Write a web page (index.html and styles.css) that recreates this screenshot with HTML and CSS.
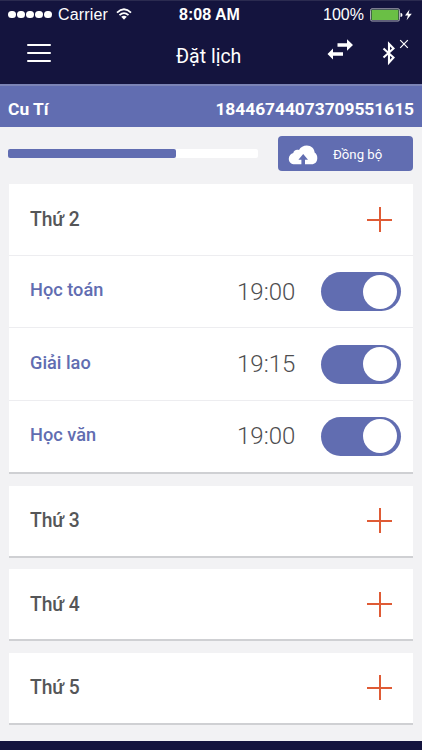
FILE: index.html
```
<!DOCTYPE html>
<html lang="vi">
<head>
<meta charset="utf-8">
<title>Đặt lịch</title>
<link rel="stylesheet" href="styles.css">
</head>
<body>
<div class="app">
  <header class="top">
    <div class="status">
      <div class="signal"><i></i><i></i><i></i><i></i><i></i></div>
      <span class="carrier">Carrier</span>
      <svg class="wifi" width="16" height="12" viewBox="0 0 16 12" fill="none" stroke="#fff" stroke-width="1.8"><path d="M1 4.6Q8-2 15 4.6M3.5 7.2Q8 3 12.5 7.2"/><path d="M5.2 8.8Q8 6.6 10.8 8.8L8 11.8z" fill="#fff" stroke="none"/></svg>
      <span class="clock">8:08 AM</span>
      <span class="percent">100%</span>
      <svg class="battery" width="42" height="14" viewBox="0 0 42 14"><rect x=".5" y=".8" width="29" height="12.2" rx="1.5" fill="none" stroke="#a9a9b5"/><rect x="1.5" y="1.8" width="27" height="10.2" fill="#6abf45"/><path d="M30.5 4.8q2 .4 2 2.1t-2 2.1z" fill="#fff"/><path d="M39.5 1.5L35 7.6h2.9L36.6 12.3 41.8 5.8h-3.2z" fill="#fff"/></svg>
    </div>
    <div class="nav">
      <svg class="menu" width="24" height="20" viewBox="0 0 24 20" stroke="#fff" stroke-width="2" stroke-linecap="round"><path d="M1 2h22M1 10h22M1 18h22"/></svg>
      <h1>Đặt lịch</h1>
      <svg class="swap" width="27" height="22" viewBox="0 0 27 22"><path d="M10.500 4.300h9.500V.2l6 5.800-6 5.800V7.700h-9.500zM16 13.300H6V9.400L.5 15 6 20.600v-3.900h10z" fill="#fff"/></svg>
      <svg class="bluetooth" width="28" height="28" viewBox="0 0 28 28" fill="none" stroke="#fff"><path d="M1.500 9.500l10 9-4.500 5V4.800l4.500 4.700-10 9" stroke-width="2.100"/><path d="M18.200 1.200l7.600 7.600M25.800 1.200l-7.600 7.600" stroke-width="1.200"/></svg>
    </div>
  </header>
  <div class="profile"><span>Cu Tí</span><span class="id">18446744073709551615</span></div>
  <main>
    <div class="sync">
      <div class="track"><div class="fill"></div></div>
      <button class="sync-btn">
        <svg width="30" height="20" viewBox="0 0 30 20"><path d="M7 19.300C3 19.300.8 17 .8 13.700C.8 10.700 2.800 8.600 5.300 8C5.500 5.500 8.300 4 11 5C12.500 2.200 15.500.5 18.800.5C23.200.5 26.400 3.500 26.600 7.500C28.500 8.800 29.400 10.800 29.300 13.300C29.200 17 27 19.300 23.500 19.300H17V14.800H20L15.200 9 10.400 14.800H13.400V19.300z" fill="#fff"/></svg>
        <span>Đồng bộ</span>
      </button>
    </div>
    <section class="card">
      <div class="day first"><h2>Thứ 2</h2><i class="plus"></i></div>
      <div class="item"><span class="name">Học toán</span><span class="time">19:00</span><i class="toggle"></i></div>
      <div class="item"><span class="name">Giải lao</span><span class="time">19:15</span><i class="toggle"></i></div>
      <div class="item"><span class="name">Học văn</span><span class="time">19:00</span><i class="toggle"></i></div>
    </section>
    <section class="card"><div class="day"><h2>Thứ 3</h2><i class="plus"></i></div></section>
    <section class="card"><div class="day"><h2>Thứ 4</h2><i class="plus"></i></div></section>
    <section class="card"><div class="day"><h2>Thứ 5</h2><i class="plus"></i></div></section>
  </main>
  <footer></footer>
</div>
</body>
</html>
```
FILE: styles.css
```
* { box-sizing: border-box; }
body { margin: 0; font-family: Roboto, "Noto Sans", sans-serif; }
h1, h2 { margin: 0; }
svg { display: block; flex: none; }
.app { width: 422px; height: 750px; overflow: hidden; background: #f2f2f4; display: flex; flex-direction: column; }
.top { height: 84px; flex: none; background: #14143e; color: #fff; border-top: 1px solid #2b2b50; }
.status { height: 27px; display: flex; align-items: center; padding-left: 8px; font-family: "Liberation Sans", Arial, sans-serif; font-size: 16px; white-space: nowrap; }
.signal { display: flex; gap: 1.5px; width: 50px; }
.signal i { width: 7.6px; height: 7.6px; border-radius: 50%; background: #fff; }
.carrier { width: 58px; letter-spacing: .15px; }
.wifi { margin-top: -1px; }
.clock { width: 61px; margin-left: 47px; font-weight: 700; }
.percent { width: 42px; margin-left: 83px; }
.battery { margin-left: 5px; }
.nav { height: 56px; display: flex; padding-left: 27px; }
.menu { margin-top: 14.5px; }
h1 { width: 70px; margin: 17px 0 0 125px; font-size: 19.5px; line-height: 24px; font-weight: 400; white-space: nowrap; }
.swap { margin: 10.5px 0 0 81px; }
.bluetooth { margin: 11px 0 0 28px; }
.profile { height: 43px; flex: none; display: flex; justify-content: space-between; align-items: center; padding: 4px 8px 0; background: #616db1; border-top: 2px solid #7c84b6; color: #fff; font-size: 17.4px; font-weight: 700; }
.id { letter-spacing: -.05px; }
main { flex: 1; padding: 9px 9px 0; }
.sync { height: 35px; display: flex; justify-content: space-between; margin: 0 0 13px -1px; }
.track { width: 250px; height: 9px; margin-top: 13px; border-radius: 2px; background: #fff; }
.fill { width: 168px; height: 9px; border-radius: 2px; background: #616db1; }
.sync-btn { width: 135px; height: 35px; border: 0; border-radius: 4px; background: #616db1; color: #fff; padding: 2px 0 0 10px; display: flex; align-items: center; gap: 15px; font: 400 13.2px Roboto, sans-serif; white-space: nowrap; }
.card { margin-bottom: 11.8px; background: #fff; border-bottom: 2px solid #cfd0d3; }
.day { height: 69.7px; display: flex; align-items: center; justify-content: space-between; padding: 0 21px; }
.first { height: 71px; }
h2 { font-size: 19.3px; line-height: 22px; padding-top: 1px; letter-spacing: -.1px; font-weight: 500; color: #555658; }
.plus { width: 25px; height: 25px; background: linear-gradient(#df5b35, #df5b35) center / 25px 2px no-repeat, linear-gradient(#df5b35, #df5b35) center / 2px 25px no-repeat; }
.item { height: 72.4px; display: flex; align-items: center; padding: 0 12px 0 21px; border-top: 1px solid #ededf0; }
.name { flex: 1; font-size: 18.2px; font-weight: 500; color: #616db1; padding-bottom: 4px; }
.time { width: 84px; font-family: Roboto, sans-serif; font-weight: 300; font-size: 24px; color: #4e4e50; }
.toggle { width: 80px; height: 39px; border-radius: 20px; background: #616db1; display: flex; align-items: center; justify-content: flex-end; padding-right: 4px; }
.toggle::after { content: ""; width: 34px; height: 34px; border-radius: 50%; background: #fff; }
footer { height: 9px; flex: none; background: #14143e; }
```
